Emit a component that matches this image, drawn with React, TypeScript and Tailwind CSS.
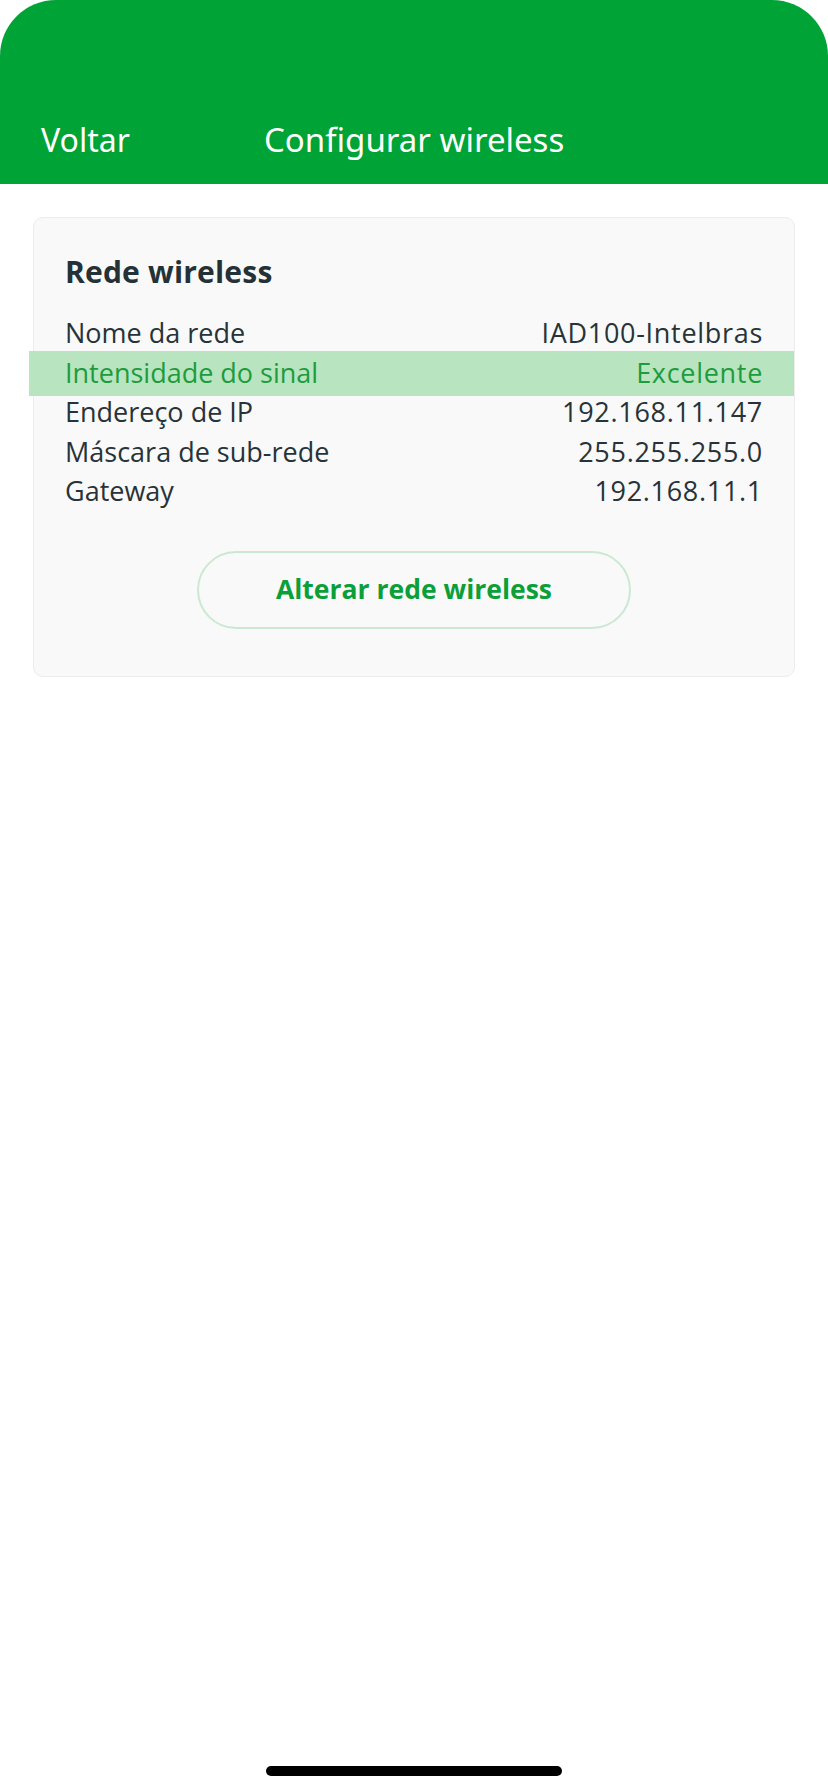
const rows = [
  { label: "Nome da rede", value: "IAD100-Intelbras" },
  { label: "Intensidade do sinal", value: "Excelente", highlight: true },
  { label: "Endereço de IP", value: "192.168.11.147" },
  { label: "Máscara de sub-rede", value: "255.255.255.0" },
  { label: "Gateway", value: "192.168.11.1" },
];

export default function App() {
  return (
    <div className="relative h-[1792px] w-[828px] bg-white font-['Open_Sans',sans-serif] overflow-hidden">
      <header className="h-[184px] bg-[#00a336] rounded-t-[56px] flex items-end pb-[24px] px-[41px] text-white font-['Noto_Sans',sans-serif]">
        <span className="text-[32px] leading-[40px] w-[223px]">Voltar</span>
        <span className="text-[33px] leading-[40px]">Configurar wireless</span>
      </header>

      <div className="px-[33px] pt-[33px]">
        <div className="rounded-[10px] border border-[#ececec] bg-[#f9f9f9] pt-[34px] pb-[47px]">
          <h2 className="px-[31px] text-[30px] leading-[40px] font-bold tracking-[0.2px] text-[#243238]">Rede wireless</h2>
          <div className="mt-[22px]">
            {rows.map((r) => (
              <div
                key={r.label}
                className={`flex justify-between items-center h-[39.3px] text-[27px] ${
                  r.highlight
                    ? "bg-[#b8e4bf] text-[#1d9c3d] -ml-[5px] pl-[36px] pr-[31px] h-[45px] -my-[2.75px] relative"
                    : "text-[#273338] px-[31px]"
                }`}
              >
                <span>{r.label}</span>
                <span className="tracking-[0.7px]">{r.value}</span>
              </div>
            ))}
          </div>
          <div className="flex justify-center mt-[40px]">
            <button className="w-[434px] h-[78px] rounded-full border-2 border-[#cbe9d2] text-[#0b9f3a] text-[26.5px] font-bold">
              Alterar rede wireless
            </button>
          </div>
        </div>
      </div>

      <div className="absolute left-[266px] top-[1766px] w-[296px] h-[10px] rounded-full bg-black" />
    </div>
  );
}
